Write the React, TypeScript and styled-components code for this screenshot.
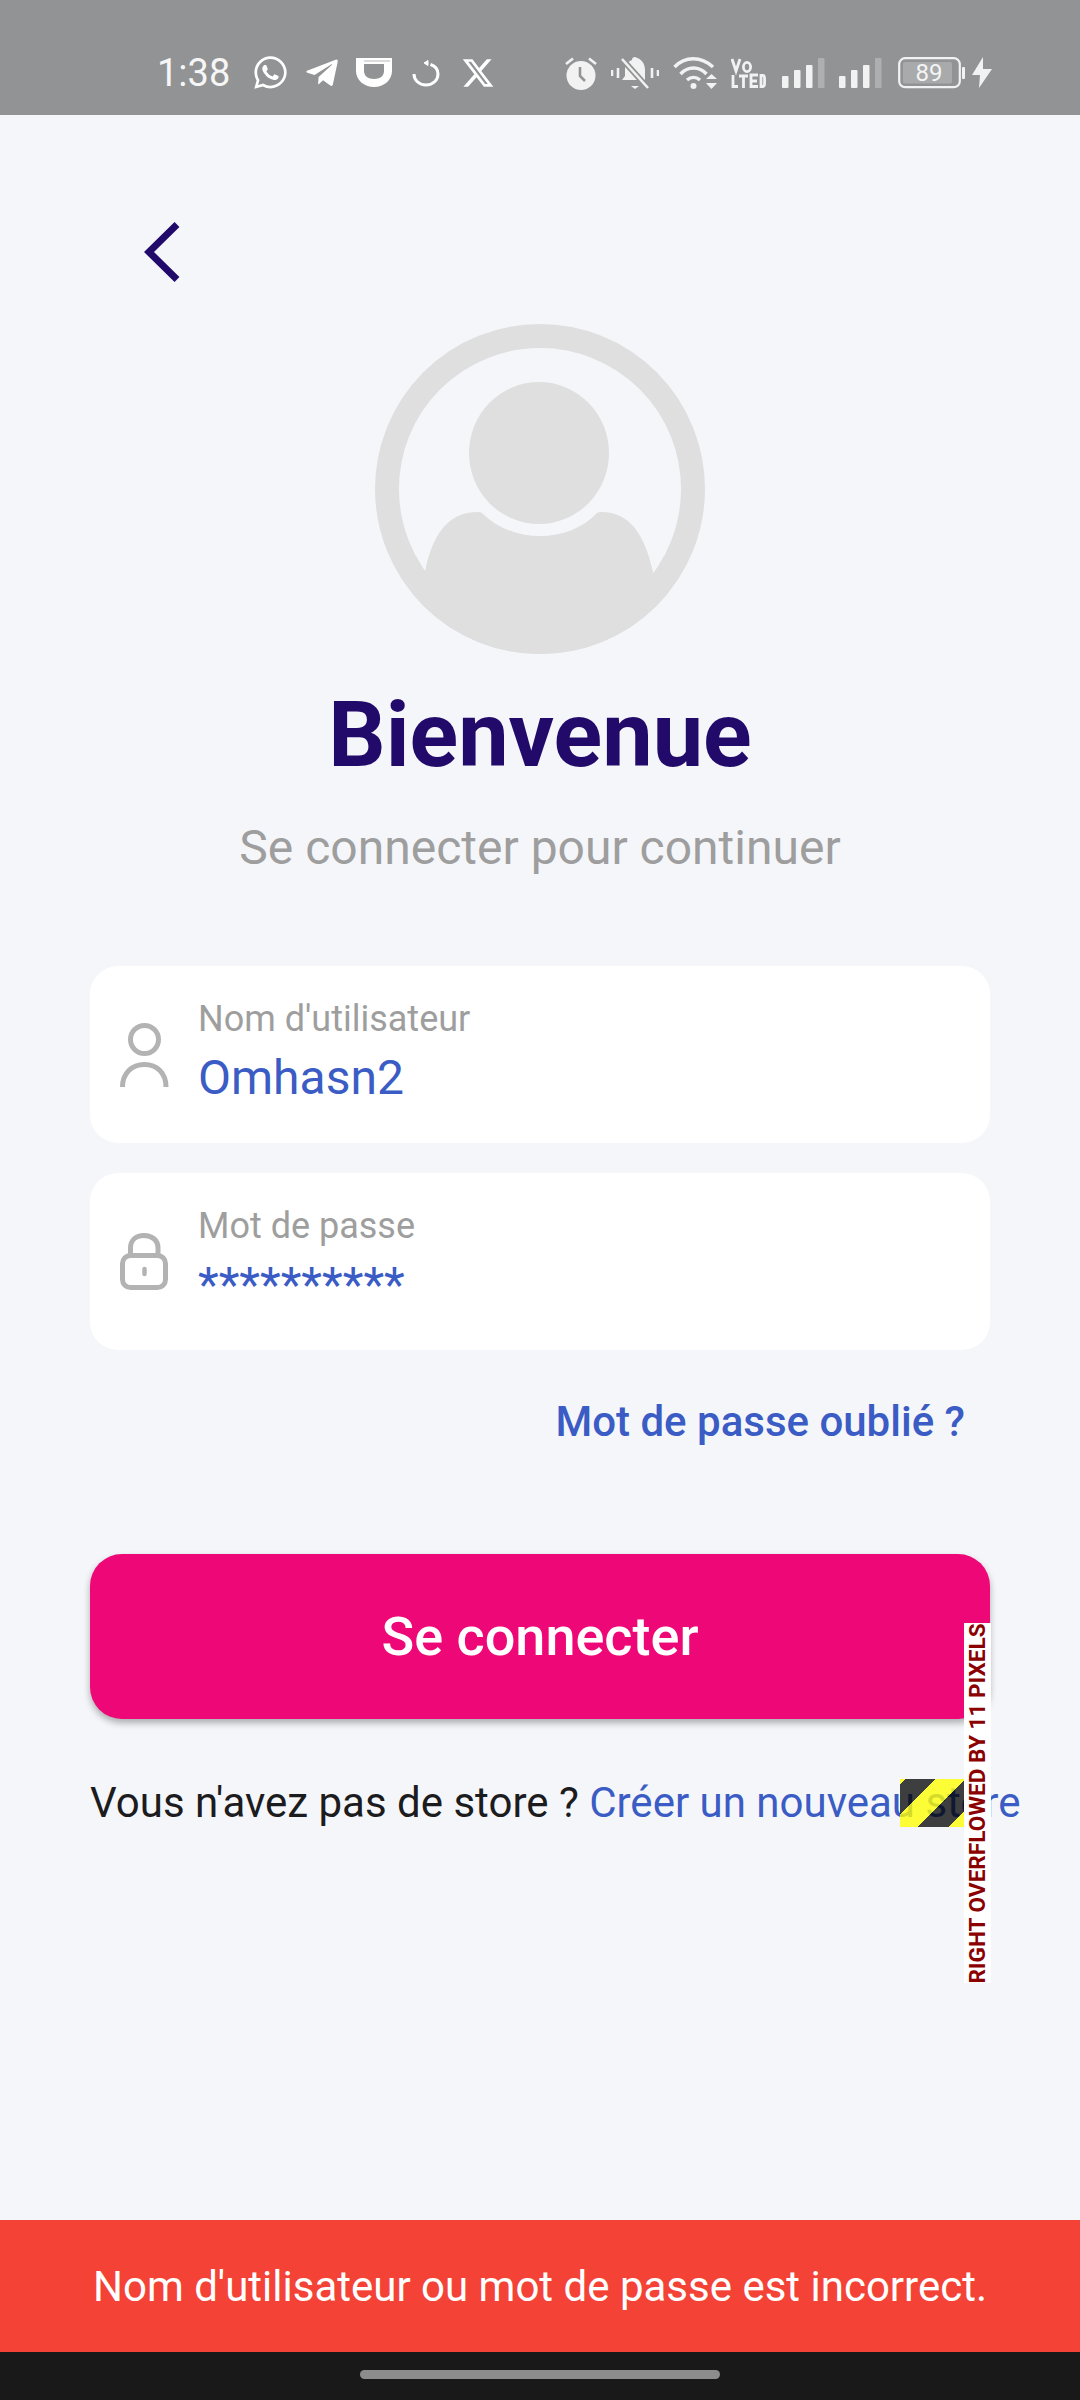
import React from "react";
import styled, { createGlobalStyle } from "styled-components";
import { FaWhatsapp, FaTelegramPlane } from "react-icons/fa";
import { FaXTwitter } from "react-icons/fa6";

const Global = createGlobalStyle`
  html, body { margin: 0; padding: 0; background: #f5f6fa; }
  * { box-sizing: border-box; }
`;

const Page = styled.div`
  width: 1080px;
  height: 2400px;
  display: flex;
  flex-direction: column;
  overflow: hidden;
  background: #f5f6fa;
  font-family: Roboto, "Liberation Sans", sans-serif;
`;

const StatusBar = styled.div`
  height: 115px;
  flex: none;
  background: #929394;
  display: flex;
  align-items: center;
  padding: 30px 0 0 157px;
  color: #fff;
`;

const Time = styled.span`
  font-size: 38px;
  line-height: 40px;
  width: 71px;
  color: #f6f6f6;
`;

const Glyph = styled.span<{ $ml: number; $w: number }>`
  display: flex;
  flex: none;
  margin-left: ${(p) => p.$ml}px;
  width: ${(p) => p.$w}px;
  height: 36px;
  align-items: center;
  justify-content: center;
  svg { display: block; flex: none; }
`;

const Content = styled.main`
  flex: 1;
  display: flex;
  flex-direction: column;
  padding: 0 90px;
`;

const BackButton = styled.div`
  margin: 107px 0 0 54px;
  height: 60px;
  width: 36px;
  svg { display: block; }
`;

const Avatar = styled.div`
  align-self: center;
  width: 330px;
  height: 330px;
  margin-top: 42px;
  svg { display: block; }
`;

const Title = styled.h1`
  margin: 32px 0 0;
  text-align: center;
  font-size: 90px;
  line-height: 100px;
  font-weight: 700;
  color: #220a6b;
`;

const Subtitle = styled.p`
  margin: 34px 0 0;
  text-align: center;
  font-size: 48px;
  line-height: 56px;
  color: #9e9e9e;
`;

const Card = styled.div<{ $mt: number }>`
  height: 177px;
  margin-top: ${(p) => p.$mt}px;
  background: #fff;
  border-radius: 28px;
  display: flex;
  align-items: center;
  padding-left: 30px;
`;

const FieldIcon = styled.div`
  width: 49px;
  height: 72px;
  flex: none;
  margin-right: 29px;
  display: flex;
  align-items: center;
  svg { display: block; }
`;

const FieldText = styled.div`
  display: flex;
  flex-direction: column;
  margin-top: -2px;
`;

const FieldLabel = styled.div`
  font-size: 36px;
  line-height: 40px;
  color: #9e9e9e;
`;

const FieldValue = styled.div`
  font-size: 48px;
  line-height: 60px;
  margin-top: 9px;
  color: #3a5cc4;
`;

const Forgot = styled.div`
  margin-top: 47px;
  padding-right: 25px;
  text-align: right;
  font-size: 42px;
  line-height: 50px;
  font-weight: 500;
  color: #3a5cc4;
`;

const LoginButton = styled.button`
  display: block;
  width: 900px;
  height: 165px;
  margin-top: 107px;
  border: 0;
  border-radius: 32px;
  background: #ee0776;
  color: #fff;
  font-family: inherit;
  font-size: 54px;
  font-weight: 500;
  box-shadow: 0 4px 7px rgba(0, 0, 0, 0.3);
`;

const SignupRow = styled.div`
  position: relative;
  margin-top: 56px;
  height: 56px;
  line-height: 56px;
  font-size: 42px;
  white-space: nowrap;
  color: #1c1c1e;
`;

const SignupLink = styled.span`
  color: #3a5cc4;
`;

const OverflowStripes = styled.div`
  position: absolute;
  left: 810px;
  top: 4px;
  width: 64px;
  height: 48px;
  background: repeating-linear-gradient(
    -45deg,
    rgba(255, 255, 0, 0.78) -10px 11.3px,
    rgba(0, 0, 0, 0.75) 11.3px 32.6px
  );
`;

const OverflowLabel = styled.div`
  position: absolute;
  left: 874px;
  top: -152px;
  width: 27px;
  height: 360px;
  background: #fff;
  display: flex;
  align-items: center;
  justify-content: center;
`;

const OverflowText = styled.span`
  transform: rotate(-90deg);
  font-size: 22.6px;
  line-height: 27px;
  font-weight: 700;
  color: #8b0000;
`;

const Snackbar = styled.div`
  height: 132px;
  flex: none;
  background: #f44336;
  color: #fff;
  display: flex;
  align-items: center;
  justify-content: center;
  font-size: 42px;
`;

const NavBar = styled.div`
  height: 48px;
  flex: none;
  background: #191919;
  display: flex;
  justify-content: center;
  padding-top: 18px;
`;

const NavHandle = styled.div`
  width: 360px;
  height: 9px;
  border-radius: 5px;
  background: #8c8c8c;
`;

const AvatarArt = () => (
  <svg width="330" height="330" viewBox="0 0 330 330">
    <defs>
      <clipPath id="avatar-clip">
        <circle cx="165" cy="165" r="165" />
      </clipPath>
    </defs>
    <circle cx="165" cy="165" r="153" fill="none" stroke="#dfdfdf" strokeWidth="24" />
    <ellipse cx="164" cy="129" rx="70" ry="71" fill="#dfdfdf" />
    <path
      clipPath="url(#avatar-clip)"
      d="M50 248C57 212 72 188 103 188Q106 188 107 189C122 204 143 212 165 212C187 212 208 204 222 189Q224 188 226 188C256 188 270 212 278 248L330 330L0 330Z"
      fill="#dfdfdf"
    />
  </svg>
);

const UserIcon = () => (
  <svg width="49" height="64" viewBox="0 0 49 64" fill="none" stroke="#b3b3b3" strokeWidth="5">
    <circle cx="24.5" cy="16.5" r="14" />
    <path d="M2.5 64C2.5 50 12 41.5 24.5 41.5S46 50 46 64" />
  </svg>
);

const LockIcon = () => (
  <svg width="49" height="57" viewBox="0 0 49 57" fill="none" stroke="#b3b3b3" strokeWidth="5">
    <rect x="2.5" y="22.5" width="43" height="32" rx="8" />
    <path d="M10.5 23V15C10.5 7 16 2.5 24 2.5S38 7 38 15V23" />
    <path d="M24.5 36V41" strokeLinecap="round" strokeWidth="4.5" />
  </svg>
);

const ShieldIcon = () => (
  <svg width="36" height="29" viewBox="0 0 36 29">
    <path d="M0 0H36V13C36 22 28 29 18 29S0 22 0 13Z" fill="#fff" />
    <path d="M8 6H28V13C28 18 24 21 18 21S8 18 8 13Z" fill="#929394" />
    <rect x="8" y="2" width="26" height="2" fill="#dcdcdc" />
  </svg>
);

const ArcIcon = () => (
  <svg width="28" height="28" viewBox="0 0 28 28" fill="none" stroke="#fff" strokeWidth="3">
    <path d="M18.5 5.5C23 7 26 10 26 15C26 21 21 26 14 26S2 21 2 15" />
    <path d="M12 4L16 1.5V6.5Z" fill="#fff" strokeWidth="1" />
  </svg>
);

const AlarmIcon = () => (
  <svg width="32" height="34" viewBox="0 0 32 34">
    <circle cx="16" cy="19.5" r="14.5" fill="#f2f2f2" />
    <path d="M1 8L8 2.5M31 8L24 2.5" stroke="#f2f2f2" strokeWidth="2.6" />
    <path d="M15 11V20L20 25" stroke="#929394" strokeWidth="2.6" fill="none" />
  </svg>
);

const MutedBellIcon = () => (
  <svg width="48" height="34" viewBox="0 0 48 34">
    <path d="M24 1C31 3 34 8 34 14V24H11L14 20V13C14 8 18 5 21 4Q21 1 24 1Z" fill="#f2f2f2" />
    <path d="M20 30H28L24 33Z" fill="#f2f2f2" />
    <path d="M11 3L37 32" stroke="#929394" strokeWidth="6" />
    <path d="M11 3L37 32" stroke="#f2f2f2" strokeWidth="2.6" />
    <path d="M1 14V20M7 12V22M41 12V22M47 14V20" stroke="#f2f2f2" strokeWidth="2.6" />
  </svg>
);

const WifiIcon = () => (
  <svg width="44" height="34" viewBox="0 0 44 34" fill="none" stroke="#f2f2f2" strokeWidth="3.4">
    <path d="M1.5 11C12 0 28 0 40 11" />
    <path d="M7.5 18C15 10 26 10 33.5 18" />
    <path d="M14 24C18 20.5 23 20.5 27 24" />
    <circle cx="20.5" cy="30" r="3" fill="#f2f2f2" stroke="none" />
    <path d="M33 23H44L38.5 18ZM33 27H44L38.5 33Z" fill="#f2f2f2" stroke="none" />
  </svg>
);

const VoLteIcon = () => (
  <svg width="35" height="30" viewBox="0 0 35 30" fill="none" stroke="#f2f2f2" strokeWidth="2.8">
    <path d="M1 1L5 13L9 1" />
    <ellipse cx="16" cy="9" rx="3.6" ry="4.6" />
    <path d="M2 17V28.5H7M8 18H17M12.5 18V30M27 17H20V28.5H27M20 23H26" />
    <path d="M30 17.5H32C33.5 17.5 33.6 19 33.6 23S33.5 28.5 32 28.5H30Z" />
  </svg>
);

const SignalIcon = () => (
  <svg width="43" height="30" viewBox="0 0 43 30">
    <rect x="0" y="18" width="6.5" height="12" rx="1" fill="#f2f2f2" />
    <rect x="12" y="12" width="6.5" height="18" rx="1" fill="#f2f2f2" />
    <rect x="24" y="7" width="6.5" height="23" rx="1" fill="#f2f2f2" />
    <rect x="36" y="0" width="6.5" height="30" rx="1" fill="#aeafb0" />
  </svg>
);

const BatteryIcon = () => (
  <svg width="68" height="32" viewBox="0 0 68 32">
    <rect x="1.2" y="1.2" width="60.6" height="29" rx="6" fill="none" stroke="#f2f2f2" strokeWidth="2.2" />
    <rect x="5" y="5" width="49" height="21.5" rx="2" fill="#a9aaab" />
    <rect x="64" y="10" width="3" height="12" rx="1" fill="#f2f2f2" />
    <text x="31" y="24" textAnchor="middle" fontFamily="Roboto, sans-serif" fontSize="24" fill="#f4f4f4">89</text>
  </svg>
);

const BoltIcon = () => (
  <svg width="20" height="31" viewBox="0 0 20 31">
    <path d="M11 0L0 18H8L7 31L20 12H11Z" fill="#f2f2f2" />
  </svg>
);

export default function App() {
  return (
    <Page>
      <Global />
      <StatusBar>
        <Time>1:38</Time>
        <Glyph $ml={26} $w={32}><FaWhatsapp size={37} color="#fff" /></Glyph>
        <Glyph $ml={20} $w={32}><FaTelegramPlane size={36} color="#fff" /></Glyph>
        <Glyph $ml={18} $w={36}><ShieldIcon /></Glyph>
        <Glyph $ml={20} $w={28}><ArcIcon /></Glyph>
        <Glyph $ml={22} $w={32}><FaXTwitter size={34} color="#fff" /></Glyph>
        <Glyph $ml={71} $w={32}><AlarmIcon /></Glyph>
        <Glyph $ml={14} $w={48}><MutedBellIcon /></Glyph>
        <Glyph $ml={14} $w={44}><WifiIcon /></Glyph>
        <Glyph $ml={14} $w={35}><VoLteIcon /></Glyph>
        <Glyph $ml={16} $w={43}><SignalIcon /></Glyph>
        <Glyph $ml={14} $w={43}><SignalIcon /></Glyph>
        <Glyph $ml={16} $w={68}><BatteryIcon /></Glyph>
        <Glyph $ml={6} $w={20}><BoltIcon /></Glyph>
      </StatusBar>
      <Content>
        <BackButton>
          <svg width="36" height="60" viewBox="0 0 36 60" fill="none" stroke="#220a6b" strokeWidth="7">
            <path d="M33 2.5L5 30L33 57.5" />
          </svg>
        </BackButton>
        <Avatar><AvatarArt /></Avatar>
        <Title>Bienvenue</Title>
        <Subtitle>Se connecter pour continuer</Subtitle>
        <Card $mt={90}>
          <FieldIcon><UserIcon /></FieldIcon>
          <FieldText>
            <FieldLabel>Nom d'utilisateur</FieldLabel>
            <FieldValue>Omhasn2</FieldValue>
          </FieldText>
        </Card>
        <Card $mt={30}>
          <FieldIcon><LockIcon /></FieldIcon>
          <FieldText>
            <FieldLabel>Mot de passe</FieldLabel>
            <FieldValue>**********</FieldValue>
          </FieldText>
        </Card>
        <Forgot>Mot de passe oublié ?</Forgot>
        <LoginButton>Se connecter</LoginButton>
        <SignupRow>
          Vous n'avez pas de store ? <SignupLink>Créer un nouveau store</SignupLink>
          <OverflowStripes />
          <OverflowLabel>
            <OverflowText>RIGHT OVERFLOWED BY 11 PIXELS</OverflowText>
          </OverflowLabel>
        </SignupRow>
      </Content>
      <Snackbar>Nom d'utilisateur ou mot de passe est incorrect.</Snackbar>
      <NavBar><NavHandle /></NavBar>
    </Page>
  );
}
